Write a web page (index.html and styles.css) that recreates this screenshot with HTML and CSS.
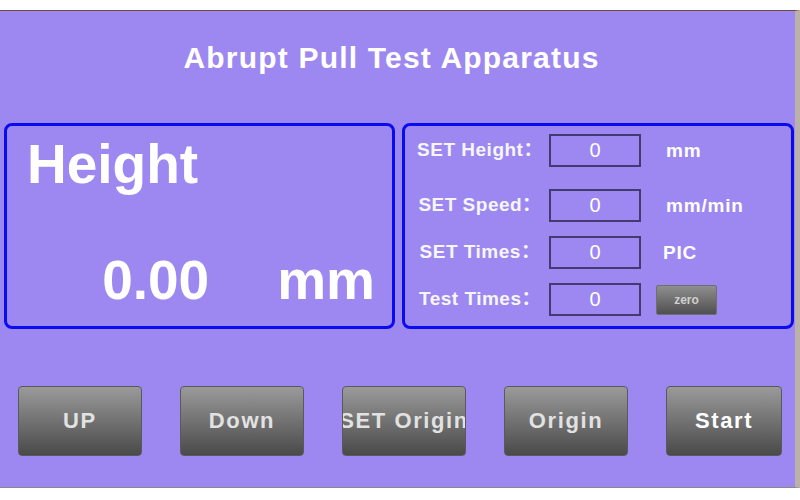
FILE: index.html
```html
<!DOCTYPE html>
<html lang="en">
<head>
    <meta charset="UTF-8">
    <meta name="viewport" content="width=device-width, initial-scale=1.0">
    <title>Abrupt Pull Test Apparatus</title>
    <link rel="stylesheet" href="styles.css">
</head>
<body>
    <div class="screen">
        <h1 class="title">Abrupt Pull Test Apparatus</h1>

        <div class="panels">
            <div class="panel height-panel">
                <div class="height-label">Height</div>
                <div class="height-value">
                    <span class="value">0.00</span>
                    <span class="unit">mm</span>
                </div>
            </div>

            <div class="panel set-panel">
                <div class="set-row first">
                    <div class="set-label">SET Height：</div>
                    <div class="set-box">0</div>
                    <div class="set-unit">mm</div>
                </div>
                <div class="set-row">
                    <div class="set-label">SET Speed：</div>
                    <div class="set-box">0</div>
                    <div class="set-unit">mm/min</div>
                </div>
                <div class="set-row">
                    <div class="set-label">SET Times：</div>
                    <div class="set-box">0</div>
                    <div class="set-unit pic">PIC</div>
                </div>
                <div class="set-row">
                    <div class="set-label">Test Times：</div>
                    <div class="set-box">0</div>
                    <button class="zero-btn">zero</button>
                </div>
            </div>
        </div>

        <div class="buttons">
            <button class="btn">UP</button>
            <button class="btn">Down</button>
            <button class="btn">SET Origin</button>
            <button class="btn">Origin</button>
            <button class="btn start">Start</button>
        </div>
    </div>
</body>
</html>
```

FILE: styles.css
```css
body {
    margin: 0;
    padding-top: 10px;
    background-color: #fff;
    font-family: "Liberation Sans", Arial, "Noto Sans CJK SC", sans-serif;
}

.screen {
    box-sizing: border-box;
    width: 800px;
    height: 478px;
    background-color: #9d88f2;
    border-top: 1px solid #6e4a3a;
    border-right: 5px solid #bab2aa;
    border-bottom: 1px solid #8a8a8a;
    display: flex;
    flex-direction: column;
}

.title {
    margin: 32px 0 0 0;
    padding-right: 12px;
    font-size: 30px;
    line-height: 30px;
    letter-spacing: 1.2px;
    font-weight: bold;
    color: #fff;
    text-align: center;
}

.panels {
    display: flex;
    gap: 7px;
    margin-top: 50px;
    padding-left: 4px;
}

.panel {
    box-sizing: border-box;
    height: 206px;
    border: 3px solid #0b0bf0;
    border-radius: 8px;
}

.height-panel {
    width: 391px;
    display: flex;
    flex-direction: column;
    padding: 11px 17px 18px 20px;
    color: #fff;
    font-size: 55px;
    font-weight: bold;
    line-height: 55px;
}

.height-value {
    margin-top: auto;
    display: flex;
    justify-content: flex-end;
}

.height-value .unit {
    margin-left: 68px;
}

.set-panel {
    width: 392px;
    padding: 8px 0 0 8px;
}

.set-row {
    display: flex;
    align-items: center;
    height: 33px;
    margin-top: 14px;
}

.set-row.first {
    margin-top: 0;
    margin-bottom: 22px;
}

.set-label {
    width: 134px;
    margin-top: -3px;
    text-align: center;
    color: #f6f6f6;
    font-size: 19px;
    line-height: 19px;
    font-weight: bold;
    letter-spacing: 0.5px;
    white-space: nowrap;
}

.set-box {
    box-sizing: border-box;
    width: 92px;
    height: 33px;
    margin-left: 2px;
    border: 2px solid #433a72;
    display: flex;
    align-items: center;
    justify-content: center;
    color: #fff;
    font-size: 20px;
}

.set-unit {
    margin-left: 25px;
    color: #fff;
    font-size: 19px;
    font-weight: bold;
    letter-spacing: 0.8px;
}

.set-unit.pic {
    margin-left: 22px;
}

.zero-btn {
    width: 61px;
    height: 30px;
    margin-left: 15px;
    padding: 0;
    border: 1px solid #6f6f6f;
    border-radius: 2px;
    background: linear-gradient(#8e8e8e, #505050);
    color: #cfcfcf;
    font-family: inherit;
    font-size: 12px;
    font-weight: bold;
}

.buttons {
    display: flex;
    gap: 38px;
    margin-top: 57px;
    padding-left: 18px;
}

.btn {
    width: 124px;
    height: 70px;
    padding: 0;
    display: flex;
    align-items: center;
    justify-content: center;
    overflow: hidden;
    white-space: nowrap;
    border: 1px solid #5a5a5a;
    border-radius: 4px;
    background: linear-gradient(#9a9a9a, #4a4a4a);
    color: #e2e2e2;
    font-family: inherit;
    font-size: 22px;
    font-weight: bold;
    letter-spacing: 1.6px;
}

.btn.start {
    width: 116px;
    color: #fff;
}
```
